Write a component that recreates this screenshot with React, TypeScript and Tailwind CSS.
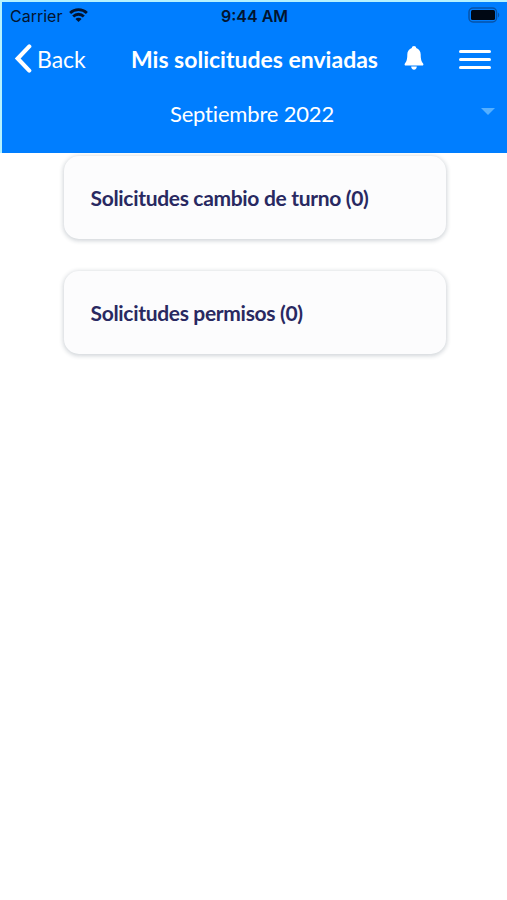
import React from 'react';

const StatusBar: React.FC = () => (
  <div className="relative flex h-7 items-center justify-between pl-[8px] pr-[7px] font-['Inter','Liberation_Sans',sans-serif] text-[#03142f]">
    <div className="flex items-center gap-[7px]">
      <span className="text-base leading-7">Carrier</span>
      <svg className="mb-[2px] h-[14px] w-[19px]" viewBox="0 0 20 15" fill="none" stroke="currentColor" strokeWidth="3">
        <path d="M1 5.3a13 13 0 0 1 18 0" />
        <path d="M4.300 9a8.200 8.200 0 0 1 11.400 0" />
        <path d="M10 15 6.700 11.800a4.700 4.700 0 0 1 6.600 0Z" fill="currentColor" stroke="none" />
      </svg>
    </div>
    <span className="absolute left-[219px] text-base leading-7 font-semibold">9:44 AM</span>
    <svg className="mb-[2px] h-4 w-8" viewBox="0 0 32 16">
      <rect x="1" y="1" width="27.5" height="14" rx="4" fill="none" stroke="#0753a8" strokeWidth="1.5" />
      <rect x="3" y="3" width="24" height="10" rx="1.5" fill="#000814" />
      <path d="M30 5.5v5c1.6-.8 1.6-4.2 0-5Z" fill="#0753a8" />
    </svg>
  </div>
);

const Header: React.FC = () => (
  <header className="h-[153px] border-t-2 border-l-2 border-[#b5f2ff] bg-[#007eff] text-white">
    <StatusBar />
    <div className="flex h-[58px] items-center pl-3 pr-4">
      <button className="flex w-[117px] items-center gap-[5px]">
        <svg className="mb-[2px] h-[29px] w-[18px]" viewBox="0 0 18 30" fill="none" stroke="currentColor" strokeWidth="4.3">
          <path d="M15.500 2.500 3.500 15 15.500 27.500" strokeLinecap="round" />
        </svg>
        <span className="text-[23px] leading-7">Back</span>
      </button>
      <h1 className="w-[273px] whitespace-nowrap text-[23px] leading-7 font-bold">Mis solicitudes enviadas</h1>
      <button className="pb-[3px]">
        <svg className="h-6 w-5" viewBox="0 0 20 24" fill="currentColor">
          <path d="M10 0C8.700 0 7.800.9 7.800 2 5 3 3.300 5.400 3.300 8.500c0 5-.9 7.200-2.400 8.900-.7.800-.2 2.200.9 2.200h16.400c1.100 0 1.600-1.400.9-2.200-1.500-1.700-2.400-3.900-2.400-8.900 0-3.100-1.700-5.500-4.500-6.500C12.200.9 11.300 0 10 0Z" />
          <path d="M7.200 20.600h5.600c0 2-1.200 3.100-2.800 3.100s-2.800-1.100-2.800-3.100Z" />
        </svg>
      </button>
      <button className="ml-auto flex flex-col gap-[5px]">
        <span className="block h-[3px] w-8 rounded-full bg-white" />
        <span className="block h-[3px] w-8 rounded-full bg-white" />
        <span className="block h-[3px] w-8 rounded-full bg-white" />
      </button>
    </div>
    <div className="flex h-[52px] items-center justify-end pr-3">
      <span className="mr-[147px] whitespace-nowrap text-[22px] leading-7 tracking-[-0.18px]">Septiembre 2022</span>
      <svg className="mb-[6px] h-[7px] w-[14px]" viewBox="0 0 14 7" fill="#55afff">
        <path d="M0 0h14L7 7Z" />
      </svg>
    </div>
  </header>
);

interface RequestCardProps {
  title: string;
}

const RequestCard: React.FC<RequestCardProps> = ({ title }) => (
  <section className="flex h-[83px] items-center rounded-[15px] bg-[#fcfcfd] pl-[26.5px] shadow-[0_1px_4px_1px_rgba(30,50,70,0.2)]">
    <h2 className="whitespace-nowrap text-[21px] leading-7 font-bold tracking-[-0.32px] text-[#292961]">{title}</h2>
  </section>
);

const App: React.FC = () => {
  return (
    <div className="min-h-[900px] w-[507px] overflow-hidden bg-white font-['Lato','Liberation_Sans',sans-serif]">
      <Header />
      <main className="ml-16 mt-[3px] flex w-[382px] flex-col gap-8">
        <RequestCard title="Solicitudes cambio de turno (0)" />
        <RequestCard title="Solicitudes permisos (0)" />
      </main>
    </div>
  );
};

export default App;
